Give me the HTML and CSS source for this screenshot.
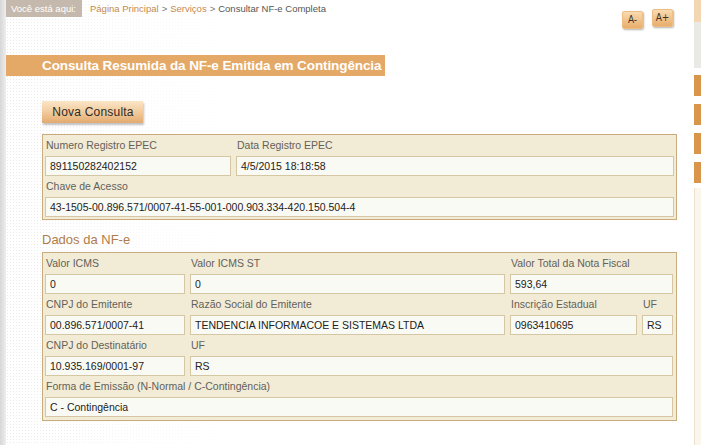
FILE: index.html
```html
<!DOCTYPE html>
<html lang="pt-BR">
<head>
  <meta charset="UTF-8" />
  <title>Consultar NF-e Completa</title>
  <link rel="stylesheet" href="styles.css">
</head>
<body>
  <div class="page">
    <div class="edge"></div>
    <div class="main">
      <div class="topbar">
        <div class="crumbs">
          <span class="here">Você está aqui:</span>
          <a href="#">Página Principal</a> &gt; <a href="#">Serviços</a> &gt; <span class="current">Consultar NF-e Completa</span>
        </div>
        <div class="fontsize">
          <button class="fs-btn minus">A-</button>
          <button class="fs-btn plus">A+</button>
        </div>
      </div>

      <h1 class="title-bar">Consulta Resumida da NF-e Emitida em Contingência</h1>

      <div class="content">
        <button class="btn">Nova Consulta</button>

        <div class="box box-epec">
          <label>Numero Registro EPEC</label>
          <label>Data Registro EPEC</label>
          <div class="field">891150282402152</div>
          <div class="field">4/5/2015 18:18:58</div>
          <label class="span-all">Chave de Acesso</label>
          <div class="field span-all">43-1505-00.896.571/0007-41-55-001-000.903.334-420.150.504-4</div>
        </div>

        <h3 class="section">Dados da NF-e</h3>

        <div class="box box-nfe">
          <label>Valor ICMS</label>
          <label>Valor ICMS ST</label>
          <label class="span-2">Valor Total da Nota Fiscal</label>
          <div class="field">0</div>
          <div class="field">0</div>
          <div class="field span-2">593,64</div>

          <label>CNPJ do Emitente</label>
          <label>Razão Social do Emitente</label>
          <label>Inscrição Estadual</label>
          <label>UF</label>
          <div class="field">00.896.571/0007-41</div>
          <div class="field">TENDENCIA INFORMACOE E SISTEMAS LTDA</div>
          <div class="field">0963410695</div>
          <div class="field">RS</div>

          <label>CNPJ do Destinatário</label>
          <label class="span-3">UF</label>
          <div class="field">10.935.169/0001-97</div>
          <div class="field span-3">RS</div>

          <label class="span-all">Forma de Emissão (N-Normal / C-Contingência)</label>
          <div class="field span-all">C - Contingência</div>
        </div>
      </div>
    </div>
    <div class="side">
      <div class="side-top"></div>
      <div class="side-gray"></div>
      <div class="tab"></div>
      <div class="tab"></div>
      <div class="tab"></div>
      <div class="tab"></div>
      <div class="side-rest"></div>
    </div>
  </div>
</body>
</html>
```

FILE: styles.css
```css
* {
  box-sizing: border-box;
}

body {
  margin: 0;
  background: #fff;
  font-family: 'Liberation Sans', Arial, sans-serif;
  font-size: 10.5px;
  color: #333;
}

.page {
  display: flex;
  height: 445px;
  overflow: hidden;
}

.edge {
  width: 6px;
  background: linear-gradient(to right, #d6d6d6, #eeeeee);
}

.main {
  flex: 1;
  background:
    linear-gradient(to right, rgba(255,255,255,0) 0, rgba(255,255,255,0.6) 120px, #fff 240px),
    radial-gradient(circle, #e9e9e9 0.8px, transparent 1px) 0 0 / 3px 3px;
}

/* top bar */
.topbar {
  height: 55px;
  display: flex;
  justify-content: space-between;
  align-items: flex-start;
}

.crumbs {
  display: flex;
  align-items: center;
  gap: 3px;
  color: #777;
  font-size: 9.5px;
  height: 17px;
}

.crumbs .here {
  background: #c5b9ad;
  color: #fff;
  width: 76px;
  height: 17px;
  line-height: 17px;
  padding-left: 5px;
  margin-right: 5px;
}

.crumbs a {
  color: #c48a50;
  text-decoration: none;
}

.crumbs .current {
  color: #555;
}

.fontsize {
  display: flex;
  gap: 9px;
  padding-right: 21px;
}

.fs-btn {
  width: 21px;
  height: 18px;
  border: 1px solid #ecbe84;
  border-radius: 2px;
  padding: 0;
  background: linear-gradient(#f9dbb0, #e8ad6c);
  box-shadow: 1px 1px 2px rgba(0,0,0,0.3);
  color: #3e3328;
  font-family: 'DejaVu Sans Condensed', 'Liberation Sans', sans-serif;
  font-size: 10px;
  line-height: 16px;
}

.fs-btn.minus {
  margin-top: 11px;
}

.fs-btn.plus {
  margin-top: 9px;
}

.title-bar {
  margin: 0;
  width: 379px;
  height: 21px;
  line-height: 21px;
  padding-left: 36px;
  background: #e5a967;
  color: #fff;
  font-size: 13.5px;
  font-weight: bold;
  letter-spacing: -0.1px;
  white-space: nowrap;
}

/* content */
.content {
  padding-left: 36px;
}

.btn {
  display: block;
  margin-top: 25px;
  width: 101px;
  height: 22px;
  border: none;
  padding: 0 0 0 1px;
  background: linear-gradient(#fae6c8, #f0c898 55%, #e2aa70);
  box-shadow: 1px 2px 2px rgba(0,0,0,0.25);
  color: #2e2a26;
  font-family: 'Liberation Sans', Arial, sans-serif;
  font-size: 12px;
  letter-spacing: 0.2px;
}

.box {
  width: 635px;
  margin-top: 11px;
  border: 1px solid #c9ac7d;
  background: #f2ecd6;
  display: grid;
  column-gap: 5px;
  padding: 0 2px 2px;
}

.box-epec {
  grid-template-columns: 186px 1fr;
  grid-template-rows: 21px 20px 21px 20px;
}

.box-nfe {
  margin-top: 4px;
  grid-template-columns: 140px 315px 127px 31px;
  grid-auto-rows: 21px 20px;
  padding-bottom: 3px;
}

.box label {
  line-height: 21px;
  padding-left: 1px;
  color: #64605a;
  white-space: nowrap;
}

.field {
  height: 20px;
  line-height: 18px;
  border: 1px solid #d6c7a4;
  background: #fafaf4;
  padding-left: 4px;
  color: #222;
  white-space: nowrap;
  overflow: hidden;
}

.span-2 { grid-column: span 2; }
.span-3 { grid-column: span 3; }
.span-all { grid-column: 1 / -1; }

.section {
  margin: 12px 0 0;
  line-height: 16px;
  font-size: 13px;
  font-weight: normal;
  color: #b27c4a;
}

/* right strip */
.side {
  width: 7px;
  display: flex;
  flex-direction: column;
}

.side-top {
  height: 22px;
  background: #f3d6b2;
}

.side-gray {
  height: 46px;
  background: #e9e9e5;
  margin-bottom: 7px;
}

.tab {
  height: 21px;
  background: #d9954a;
  margin-bottom: 8px;
}

.side-rest {
  flex: 1;
  margin-top: -3px;
  background: #faf6ee;
  border-left: 1px solid #efe2cc;
}
```
